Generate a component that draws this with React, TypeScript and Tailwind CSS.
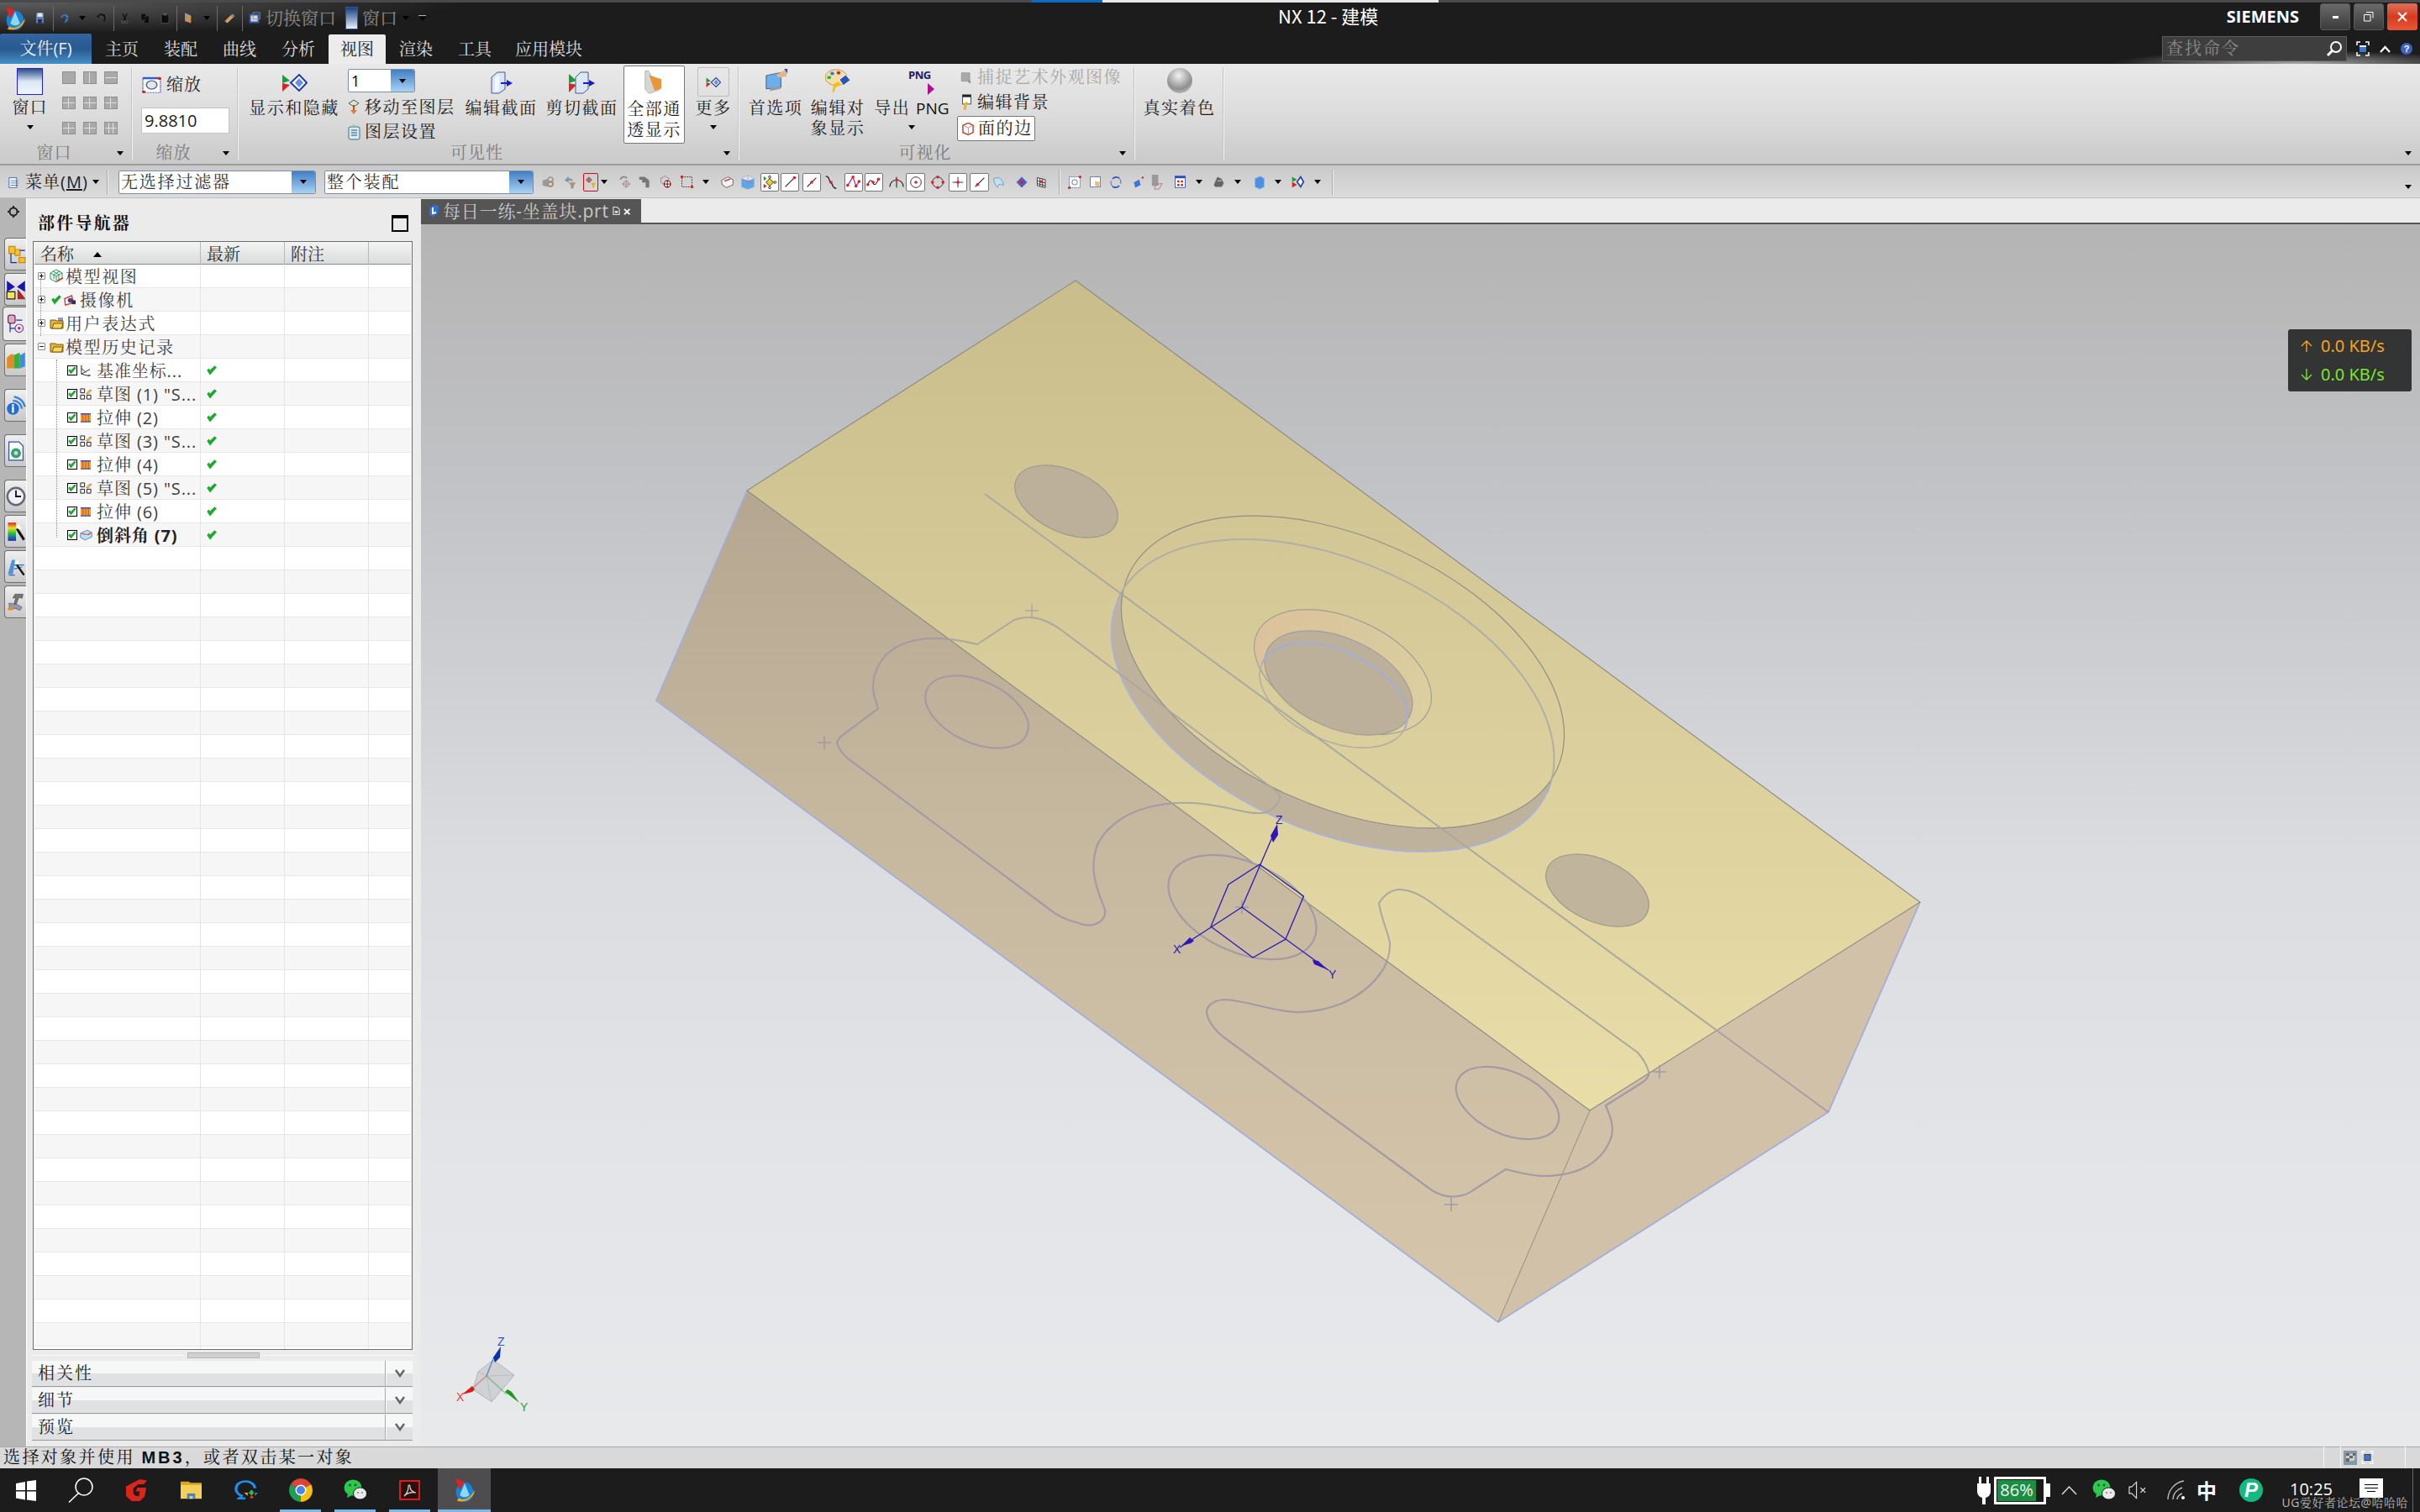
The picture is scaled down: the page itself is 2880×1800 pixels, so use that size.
import React from "react";

const cjk = "font-['Noto_Sans_CJK_SC','Liberation_Sans',sans-serif]";
const song = "font-['Open_Sans','Noto_Serif_CJK_SC','Noto_Sans_CJK_SC',sans-serif]";

const Caret = ({ className = "" }: { className?: string }) => (
  <span className={`inline-block h-0 w-0 shrink-0 border-x-[4px] border-t-[5px] border-x-transparent border-t-black ${className}`} />
);

const DropBtn = () => (
  <span className="flex h-full w-[28px] shrink-0 items-center justify-center rounded-r-[2px] bg-gradient-to-b from-[#3f7fc4] to-[#a9d2f2]">
    <Caret />
  </span>
);

const Icon = ({ size = 20, children, className = "" }: { size?: number; children: React.ReactNode; className?: string }) => (
  <svg width={size} height={size} viewBox="0 0 20 20" className={`shrink-0 ${className}`}>
    {children}
  </svg>
);

const NxLogo = ({ size = 26 }: { size?: number }) => (
  <svg width={size} height={size} viewBox="0 0 26 26" className="shrink-0">
    <ellipse cx="13" cy="15" rx="9" ry="10" fill="#1583d8" />
    <path d="M7 21c4 3 11 2 16-8 1 6-8 14-18 11z" fill="#f2a51e" />
    <path d="M13 6l5 12c-3 3-7 3-10 0z" fill="#8fd7f2" />
    <path d="M3 1l10 3-5 9z" fill="#d8232a" />
  </svg>
);

const Sep = ({ className = "" }: { className?: string }) => <span className={`h-[30px] w-px shrink-0 bg-[#6a6a6a] ${className}`} />;

const TitleBar = () => (
  <div className="relative flex h-[37px] items-center bg-[#1c1c1c]">
    <div className="flex h-full w-[545px] items-center bg-[radial-gradient(ellipse_100%_100%_at_left_top,#5e5e5e,#1c1c1c)] pl-[3px]">
      <NxLogo size={30} />
      <Icon size={15} className="ml-[7px]">
        <path d="M4 2h12v16H4z" fill="#5d7fc0" />
        <path d="M6 2h8v6H6z" fill="#dfe6f4" />
        <path d="M7 12h6v6H7z" fill="#1f2c52" />
      </Icon>
      <Sep className="ml-[8px]" />
      <Icon size={15} className="ml-[6px]">
        <path d="M3 8a7 7 0 0 1 13 1l-4 1c-1-4-4-5-6-3l2 2H3zM8 18c2-2 3-5 3-7l4 0c0 3-3 6-7 7z" fill="#3f78c6" />
      </Icon>
      <Caret className="ml-[9px] border-t-[#999]" />
      <Icon size={14} className="ml-[12px]">
        <path d="M14 8a5 5 0 0 0-9-1l3 2H2V3l2 2a7 7 0 0 1 13 4c0 4-2 7-5 8 1-3 2-6 2-9z" fill="#0c0c0c" stroke="#555" strokeWidth=".5" />
      </Icon>
      <Sep className="ml-[7px]" />
      <Icon size={14} className="ml-[6px]">
        <path d="M13 2l-6 12M6 2l5 12" stroke="#111" strokeWidth="2" />
        <circle cx="6" cy="16" r="2.400" fill="none" stroke="#666" />
        <circle cx="12" cy="16" r="2.400" fill="none" stroke="#666" />
      </Icon>
      <Icon size={14} className="ml-[10px]">
        <path d="M3 2h8v11H3zM8 6h8v12H8z" fill="#0b0b0b" stroke="#555" strokeWidth=".5" />
      </Icon>
      <Icon size={15} className="ml-[9px]">
        <path d="M4 4h12v14H4z" fill="#0c0c0c" stroke="#555" />
        <path d="M7 2h6v4H7z" fill="#555" />
      </Icon>
      <Sep className="ml-[6px]" />
      <Icon size={16} className="ml-[6px]">
        <path d="M4 2l9 4v11l-9-3z" fill="#c9924f" />
        <path d="M4 2l9 4-5 0-4 8z" fill="#999" />
      </Icon>
      <Caret className="ml-[9px] border-t-[#999]" />
      <Sep className="ml-[8px]" />
      <Icon size={16} className="ml-[6px]">
        <path d="M3 14l9-9 4 3-9 9z" fill="#c9a167" />
        <path d="M12 5l3-2 3 3-2 3z" fill="#888" />
      </Icon>
      <Sep className="ml-[7px]" />
      <Icon size={18} className="ml-[5px]">
        <path d="M4 5h11v10H4z" fill="#d8d8d8" stroke="#2a5fc0" strokeWidth="2" />
        <path d="M8 2h9v9H8z" fill="none" stroke="#888" />
      </Icon>
      <span className={`${song} ml-[4px] whitespace-nowrap text-[21px] leading-none text-[#8a8a8a]`}>切换窗口</span>
      <span className="ml-[11px] h-[27px] w-[15px] shrink-0 border border-[#2d4ec8] bg-gradient-to-b from-[#1b3f7c] to-[#e9f2fb]" />
      <span className={`${song} ml-[5px] whitespace-nowrap text-[21px] leading-none text-[#8a8a8a]`}>窗口</span>
      <Caret className="ml-[6px] border-t-[#bbb]" />
      <span className="ml-[11px] flex flex-col items-center gap-[1px]">
        <span className="h-px w-[9px] bg-[#aaa]" />
        <Caret className="border-t-[#aaa]" />
      </span>
    </div>
    <span className={`${cjk} absolute left-[1521px] top-0 text-[22px] leading-[30px] text-white`}>NX 12 - 建模</span>
    <div className="absolute right-[3px] top-[1px] flex items-center">
      <span className="mr-[25px] font-['Open_Sans',sans-serif] text-[20px] font-bold leading-none text-white">SIEMENS</span>
      <span className="mr-[4px] flex h-[32px] w-[36px] items-center justify-center rounded-[3px] border border-[#5a5a5a] bg-gradient-to-b from-[#6a6a6a] to-[#3c3c3c]">
        <span className="h-[3px] w-[7px] bg-white" />
      </span>
      <span className="mr-[4px] flex h-[32px] w-[36px] items-center justify-center rounded-[3px] border border-[#5a5a5a] bg-gradient-to-b from-[#6a6a6a] to-[#3c3c3c]">
        <svg width="12" height="12" viewBox="0 0 12 12">
          <path d="M3 .5h8v7M.5 3.500h7.500v7.500h-7.500z" fill="none" stroke="#fff" />
        </svg>
      </span>
      <span className="flex h-[32px] w-[36px] items-center justify-center rounded-[3px] bg-gradient-to-b from-[#d9705a] via-[#d9391a] to-[#e4583a]">
        <svg width="12" height="12" viewBox="0 0 12 12">
          <path d="M1 1l10 10M11 1L1 11" stroke="#fff" strokeWidth="2" />
        </svg>
      </span>
    </div>
  </div>
);

const tabs = ["主页", "装配", "曲线", "分析", "视图", "渲染", "工具", "应用模块"];

const TabBar = () => (
  <div className="relative flex h-[36px] items-end bg-[#1c1c1c]">
    <div className={`${song} flex h-[36px] w-[109px] items-center justify-center rounded-t-[2px] bg-gradient-to-b from-[#34659f] via-[#28598f] to-[#4590c7] text-[20px] text-[#e8eef6]`}>
      文件(F)
    </div>
    <div className={`${song} ml-[1px] flex text-[20px] text-[#dcdcdc]`}>
      {tabs.map((t) => (
        <span
          key={t}
          className={
            t === "视图"
              ? "mx-px flex h-[35px] w-[68px] items-center justify-center rounded-t-[2px] bg-[#ececec] text-[#222]"
              : "flex h-[35px] min-w-[70px] items-center justify-center whitespace-nowrap px-[13px]"
          }
        >
          {t}
        </span>
      ))}
    </div>
    <div className="absolute bottom-0 right-0 h-[16px] w-[370px] bg-[radial-gradient(ellipse_at_60%_bottom,#a8a8a8,transparent_70%)]" />
    <div className="absolute bottom-[3px] right-[87px] flex h-[30px] w-[220px] items-center justify-between border border-[#5c5c5c] bg-[#3e3e3e] pl-[4px] pr-[4px]">
      <span className={`${song} text-[20px] tracking-[2px] text-[#8d8d8d]`}>查找命令</span>
      <svg width="20" height="20" viewBox="0 0 20 20">
        <circle cx="12" cy="8" r="6" fill="none" stroke="#fff" strokeWidth="2" />
        <path d="M7.500 12.500L2 18" stroke="#fff" strokeWidth="3" />
      </svg>
    </div>
    <div className="absolute bottom-[9px] right-[9px] flex items-center gap-[12px]">
      <svg width="16" height="18" viewBox="0 0 16 18">
        <path d="M1 5V1h4M11 1h4v4M15 13v4h-4M5 17H1v-4" fill="none" stroke="#fff" strokeWidth="1.500" />
        <rect x="4" y="5" width="8" height="8" fill="#3c78d2" />
        <rect x="4" y="5" width="8" height="2" fill="#e8eef8" />
      </svg>
      <svg width="13" height="9" viewBox="0 0 13 9">
        <path d="M1 8l5.500-6L12 8" fill="none" stroke="#fff" strokeWidth="2.200" />
      </svg>
      <span className="flex h-[14px] w-[14px] items-center justify-center rounded-full bg-[#3c63c4] font-['Liberation_Sans',sans-serif] text-[11px] font-bold text-white">?</span>
    </div>
  </div>
);

const Grid = ({ h, v }: { h: boolean; v: number }) => (
  <span className="relative block h-[13px] w-[14px] bg-[#a9a9a9] outline outline-1 outline-[#8f8f8f]">
    {h && <span className="absolute left-0 top-[6px] h-px w-full bg-[#e0e0e0]" />}
    {v === 1 && <span className="absolute left-[6px] top-0 h-full w-px bg-[#e0e0e0]" />}
    {v === 2 && <span className="absolute left-[4px] top-0 h-full w-px bg-[#e0e0e0]" />}
    {v === 2 && <span className="absolute left-[9px] top-0 h-full w-px bg-[#e0e0e0]" />}
  </span>
);

const VSep = () => <div className="h-[111px] w-px shrink-0 bg-[#f2f2f2] shadow-[-1px_0_0_#c4c4c4]" />;

const Label = ({ children, className = "" }: { children: React.ReactNode; className?: string }) => (
  <span className={`${song} whitespace-nowrap text-[20px] leading-[24px] tracking-[1.500px] text-[#1d1d1d] ${className}`}>{children}</span>
);

const Footer = ({ children }: { children: React.ReactNode }) => (
  <div className="flex h-[24px] shrink-0 items-center">
    <span className={`${song} flex-1 text-center text-[20px] leading-none tracking-[1px] text-[#7c7c7c]`}>{children}</span>
    <span className="flex w-[28px] justify-center">
      <Caret />
    </span>
  </div>
);

const ShowHide = ({ w = 31, h = 21 }: { w?: number; h?: number }) => (
  <svg width={w} height={h} viewBox="0 0 31 21" className="shrink-0">
    <path d="M1 1l9 7-9 3z" fill="#1b9c3b" />
    <path d="M1 11l9 2-9 8z" fill="#d6242b" />
    <path d="M11 10.500L21 1l9 9.500L21 20z" fill="#fff" stroke="#2040b0" strokeWidth="2" />
    <path d="M16 10.500L21 5l5 5.500L21 16z" fill="#6a8fe0" />
  </svg>
);

const Ribbon = () => (
  <div className="relative flex h-[121px] bg-gradient-to-b from-[#e9e9e9] via-[#dcdcdc] to-[#c9c9c9] pt-[4px] shadow-[inset_0_-2px_0_#9c9c9c]">
    {/* 窗口 */}
    <div className="flex h-[114px] w-[157px] shrink-0 flex-col">
      <div className="flex h-[90px]">
        <div className="ml-[14px] flex w-[43px] flex-col items-center pt-px">
          <span className="h-[32px] w-[31px] border border-[#2020d8] bg-gradient-to-b from-[#2d4f85] via-[#dce8f6] to-[#eef4fb]" />
          <Label className="mt-[3px] tracking-[1px]">窗口</Label>
          <Caret className="mt-[9px]" />
        </div>
        <div className="ml-[18px] mt-[6px] grid h-[73px] grid-cols-3 gap-x-[11px] gap-y-[17px]">
          <Grid h={false} v={0} />
          <Grid h={false} v={1} />
          <Grid h={true} v={0} />
          <Grid h={true} v={1} />
          <Grid h={true} v={1} />
          <Grid h={true} v={1} />
          <Grid h={true} v={1} />
          <Grid h={true} v={1} />
          <Grid h={true} v={2} />
        </div>
      </div>
      <Footer>窗口</Footer>
    </div>
    <VSep />
    {/* 缩放 */}
    <div className="flex h-[114px] w-[125px] shrink-0 flex-col">
      <div className="flex h-[90px] flex-col pl-[10px] pt-[9px]">
        <div className="flex h-[24px] items-center pl-px">
          <svg width="23" height="20" viewBox="0 0 22 24" preserveAspectRatio="none">
            <rect x="1" y="2" width="20" height="21" fill="#fff" stroke="#2a3fc8" strokeDasharray="2 1" />
            <rect x="1" y="1" width="20" height="3" fill="#2a60c8" />
            <circle cx="11" cy="12" r="6" fill="#dfe6ee" stroke="#667" strokeWidth="1.500" />
            <circle cx="2" cy="22" r="2" fill="#e21d1d" />
            <circle cx="20" cy="3" r="2" fill="#e21d1d" />
          </svg>
          <Label className="ml-[6px] tracking-[1px]">缩放</Label>
        </div>
        <div className="mt-[15px] flex h-[31px] w-[105px] items-center border border-[#c4c4c4] bg-white pl-[3px] font-['Open_Sans',sans-serif] text-[20px] leading-none text-[#222]">
          9.8810
        </div>
      </div>
      <Footer>缩放</Footer>
    </div>
    <VSep />
    {/* 可见性 */}
    <div className="flex h-[114px] w-[595px] shrink-0 flex-col">
      <div className="flex h-[90px]">
        <div className="ml-[12px] flex w-[108px] flex-col items-center pt-[8px]">
          <ShowHide />
          <Label className="mt-[8px]">显示和隐藏</Label>
        </div>
        <div className="ml-[10px] flex w-[130px] flex-col pt-[2px]">
          <div className="flex h-[28px] w-[80px] items-center justify-between rounded-[2px] border border-[#7a8fa8] bg-white pl-[3px]">
            <span className="font-['Open_Sans',sans-serif] text-[18px] leading-none">1</span>
            <DropBtn />
          </div>
          <div className="mt-[6px] flex items-center">
            <svg width="15" height="20" viewBox="0 0 15 20" className="mr-[5px] shrink-0">
              <path d="M7 1l6 4-6 4-6-4z" fill="#cdeccb" stroke="#555" />
              <path d="M7 7v7" stroke="#d9402a" strokeWidth="2" />
              <path d="M3 13h8l-4 5z" fill="#d9802a" />
            </svg>
            <Label>移动至图层</Label>
          </div>
          <div className="mt-[5px] flex items-center">
            <svg width="15" height="20" viewBox="0 0 15 20" className="mr-[5px] shrink-0">
              <rect x="1" y="4" width="13" height="15" rx="2" fill="#d9eaf7" stroke="#3e6f7a" />
              <path d="M4 8h7M4 11h7M4 14h7" stroke="#2d4f6a" />
              <path d="M4 4l3-3 3 3z" fill="#82c5a0" />
            </svg>
            <Label>图层设置</Label>
          </div>
        </div>
        <div className="ml-[10px] flex w-[85px] flex-col items-center pt-[5px]">
          <svg width="26" height="27" viewBox="0 0 26 27">
            <path d="M1 7l7-6h9v20l-7 5H1z" fill="#dbe7f8" stroke="#4a5a7a" />
            <path d="M5 8l5-4v18l-5 3z" fill="#f4f8ff" />
            <path d="M12 14h8" stroke="#1d1dc8" strokeWidth="2" />
            <path d="M19 10l7 4-7 4z" fill="#1d1dc8" />
          </svg>
          <Label className="mt-[5px]">编辑截面</Label>
        </div>
        <div className="ml-[11px] flex w-[85px] flex-col items-center pt-[5px]">
          <svg width="33" height="27" viewBox="0 0 33 27">
            <path d="M1 3l9 8-9 3z" fill="#1b9c3b" />
            <path d="M1 14l9 2-9 9z" fill="#d6242b" />
            <path d="M9 7l6-6h9v20l-6 5H9z" fill="#dbe7f8" stroke="#4a5a7a" />
            <path d="M18 14h8" stroke="#1d1dc8" strokeWidth="2" />
            <path d="M25 10l7 4-7 4z" fill="#1d1dc8" />
          </svg>
          <Label className="mt-[5px]">剪切截面</Label>
        </div>
        <div className="-mt-[2px] ml-[7px] flex h-[93px] w-[73px] flex-col items-center rounded-[2px] border border-[#777] bg-white pt-[4px]">
          <svg width="30" height="29" viewBox="0 0 34 36">
            <path d="M3 2l5 0 16 28-15 5-6-6z" fill="#d6d6d6" stroke="#aaa" />
            <path d="M9 8l18 6 0 14-10 3z" fill="#e5973a" />
          </svg>
          <Label className="mt-[5px] leading-[25px]">全部通</Label>
          <Label className="leading-[25px]">透显示</Label>
        </div>
        <div className="ml-[13px] flex w-[42px] flex-col items-center">
          <span className="flex h-[35px] w-[38px] items-center justify-center rounded-[2px] border border-[#bcbcbc]">
            <ShowHide w={18} h={16} />
          </span>
          <Label className="mt-[2px]">更多</Label>
          <Caret className="mt-[8px]" />
        </div>
      </div>
      <Footer>可见性</Footer>
    </div>
    <VSep />
    {/* 可视化 */}
    <div className="flex h-[114px] w-[470px] shrink-0 flex-col">
      <div className="flex h-[90px]">
        <div className="ml-[11px] flex w-[64px] flex-col items-center pt-[2px]">
          <svg width="33" height="30" viewBox="0 0 34 34" preserveAspectRatio="none">
            <path d="M5 9l18-4 0 20-18 2z" fill="#6ab0ee" stroke="#556" />
            <path d="M9 30l14-3-3-4-9 2z" fill="#99a" />
            <path d="M17 8l10-6 4-1-1 9-9 2z" fill="#e2b58a" />
            <path d="M27 0l4 0 0 6z" fill="#2e4aa0" />
          </svg>
          <Label className="mt-[5px]">首选项</Label>
        </div>
        <div className="ml-[10px] flex w-[64px] flex-col items-center pt-[2px]">
          <svg width="30" height="30" viewBox="0 0 32 38" preserveAspectRatio="none">
            <ellipse cx="14" cy="13" rx="14" ry="12" fill="#f5dfa8" stroke="#b89148" />
            <circle cx="9" cy="7" r="2.500" fill="#2a80d8" />
            <circle cx="17" cy="6" r="2.500" fill="#d82a2a" />
            <circle cx="5" cy="13" r="2.500" fill="#30b050" />
            <path d="M18 16l8-7 6 8-9 8z" fill="#2d52b8" stroke="#fff" />
            <path d="M12 22l6-3 1 6-6 3-1 6-3 2 1-8z" fill="#f2c012" />
          </svg>
          <Label className="mt-[5px]">编辑对</Label>
          <Label>象显示</Label>
        </div>
        <div className="ml-[10px] flex w-[92px] flex-col items-center">
          <div className="ml-[26px] flex h-[32px] w-[34px] flex-col pt-[3px]">
            <span className="font-['Open_Sans',sans-serif] text-[13px] font-bold leading-[13px] tracking-[-0.5px] text-[#1c1c66]">PNG</span>
            <span className="ml-[23px] mt-[3px] h-0 w-0 border-y-[7px] border-l-[8px] border-y-transparent border-l-[#b0108a]" />
          </div>
          <Label className="mt-[5px]">
            导出 <span className="font-['Open_Sans',sans-serif] text-[19px] tracking-normal text-[#111]">PNG</span>
          </Label>
          <Caret className="mt-[8px]" />
        </div>
        <div className="ml-[8px] flex flex-col">
          <div className="flex h-[24px] items-center pl-[3px]">
            <svg width="16" height="15" viewBox="0 0 16 18" className="mr-[5px] shrink-0">
              <rect x="1" y="2" width="12" height="12" fill="#a9a9a9" stroke="#888" strokeDasharray="2 1" />
              <path d="M10 12l5 3-3 2z" fill="#a06ab0" />
            </svg>
            <Label className="!text-[#a9a9a9]">捕捉艺术外观图像</Label>
          </div>
          <div className="mt-[6px] flex h-[24px] items-center pl-[4px]">
            <svg width="15" height="20" viewBox="0 0 15 22" className="mr-[5px] shrink-0">
              <rect x="2" y="1" width="11" height="12" fill="#fff" stroke="#444" />
              <rect x="2" y="1" width="11" height="3" fill="#222" />
              <path d="M6 10l3 1-2 5v4l-4 1 1-6z" fill="#f2b21b" />
            </svg>
            <Label>编辑背景</Label>
          </div>
          <div className="mt-[4px] flex h-[30px] w-[93px] items-center rounded-[2px] border border-[#777] bg-white pl-[4px]">
            <svg width="15" height="18" viewBox="0 0 16 18" className="mr-[5px] shrink-0">
              <path d="M2 5l7-3 6 3v9l-6 3-7-3z" fill="#fff" stroke="#d0391a" strokeWidth="1.500" />
              <path d="M2 5l7 3 6-3M9 8v9" fill="none" stroke="#999" />
            </svg>
            <Label>面的边</Label>
          </div>
        </div>
      </div>
      <Footer>可视化</Footer>
    </div>
    <VSep />
    <div className="flex h-[90px] w-[105px] shrink-0 flex-col items-center pt-px">
      <span className="h-[30px] w-[30px] rounded-full bg-[radial-gradient(circle_at_45%_30%,#f2f2f2,#8f8f8f_60%,#ddd)]" />
      <Label className="mt-[6px]">真实着色</Label>
    </div>
    <VSep />
    <Caret className="absolute bottom-[12px] right-[10px]" />
  </div>
);

const SelectBox = ({ text, className = "" }: { text: string; className?: string }) => (
  <span className={`flex h-[28px] shrink-0 items-center justify-between rounded-[2px] border border-[#7a8fa8] bg-white pl-[2px] ${className}`}>
    <span className={`${song} text-[20px] leading-none tracking-[1.800px] text-[#333]`}>{text}</span>
    <DropBtn />
  </span>
);

const Mini = ({ children, box = false, className = "" }: { children: React.ReactNode; box?: boolean; className?: string }) => (
  <span className={`flex h-[22px] shrink-0 items-center justify-center ${box ? "rounded-[2px] border border-[#777] bg-white" : ""} ${className}`}>
    {children}
  </span>
);

const SmallCaret = ({ className = "" }: { className?: string }) => <Caret className={`border-x-[3px] border-t-[4px] ${className}`} />;
const BarSep = ({ className = "" }: { className?: string }) => <span className={`h-[30px] w-px shrink-0 bg-[#aaa] shadow-[1px_0_0_#eee] ${className}`} />;

const line = <path d="M4 16L16 4" stroke="#222" strokeWidth="1.200" />;
const redDot = (x: number, y: number) => <circle cx={x} cy={y} r="2" fill="#e02020" />;

const SelectBar = () => (
  <div className="relative flex h-[39px] items-center bg-gradient-to-b from-[#c9c9c9] to-[#dcdcdc] pl-[10px] shadow-[inset_0_-1px_0_#bdbdbd]">
    <svg width="16" height="18" viewBox="0 0 18 18" className="shrink-0">
      <rect x="1" y="3" width="10" height="13" fill="#fff" stroke="#2a60c8" />
      <path d="M3 7h10M3 10h10M3 13h10" stroke="#4a6ab8" />
    </svg>
    <span className={`${song} ml-[4px] w-[80px] whitespace-nowrap text-[20px] leading-none tracking-[1px] text-[#1d1d1d]`}>
      菜单(<span className="underline">M</span>)
    </span>
    <Caret />
    <BarSep className="ml-[9px]" />
    <SelectBox text="无选择过滤器" className="ml-[13px] w-[235px]" />
    <SelectBox text="整个装配" className="ml-[10px] w-[249px]" />
    <div className="flex items-center">
      <Mini className="ml-[9px] w-[17px]"><Icon size={17}><path d="M2 8l7-2v11l-7-2z" fill="#9a9a9a" /><circle cx="13" cy="7" r="3.500" fill="none" stroke="#999" strokeWidth="2" /><circle cx="13" cy="13" r="3.500" fill="none" stroke="#a08a60" strokeWidth="2" /></Icon></Mini>
      <Mini className="ml-[9px] w-[17px]"><Icon size={17}><path d="M8 11h10l-3 4v4h-4v-4z" fill="#a09878" /><path d="M2 8l6-6v3c4 0 6 2 6 5-2-2-4-2-6-2v3z" fill="#7a98a8" /></Icon></Mini>
      <Mini box className="ml-[7px] w-[18px] !border-[#d01010] !bg-transparent"><Icon size={14}><circle cx="7" cy="6" r="3.500" fill="none" stroke="#702020" /><path d="M7 1v10M2 6h10" stroke="#702020" /><path d="M10 11h9l-3 4v4h-3v-4z" fill="#e8b020" /></Icon></Mini>
      <Caret className="ml-[3px]" />
      <Mini className="ml-[13px] w-[15px]"><Icon size={17}><path d="M4 7a5 5 0 0 1 9-2" fill="none" stroke="#888" strokeWidth="2" /><circle cx="12" cy="13" r="4" fill="none" stroke="#a08080" /><path d="M12 7v12M6 13h12" stroke="#a08080" /></Icon></Mini>
      <Mini className="ml-[8px] w-[17px]"><Icon size={17}><path d="M2 3h8l6 5v10h-5v-7H6V7H2z" fill="#777" /></Icon></Mini>
      <Mini className="ml-[8px] w-[17px]"><Icon size={17}><path d="M3 5l6-3 5 3v6l-5 3-6-3z" fill="none" stroke="#444" strokeDasharray="1 1" /><circle cx="12" cy="13" r="4.500" fill="#fff" stroke="#c01010" strokeWidth="1.500" /><path d="M12 8v10M7 13h10" stroke="#111" /></Icon></Mini>
      <Mini className="ml-[8px] w-[17px]"><Icon size={17}><rect x="3" y="3" width="14" height="14" fill="none" stroke="#222" strokeDasharray="2 1.500" />{redDot(3, 3)}{redDot(17, 17)}</Icon></Mini>
      <SmallCaret className="ml-[10px]" />
      <Mini className="ml-[13px] w-[17px]"><Icon size={17}><path d="M2 8l9-5 7 4v7l-9 4-6-4z" fill="#f3f3f3" stroke="#555" /><path d="M6 9l8-3" stroke="#d02020" strokeWidth="1.500" /></Icon></Mini>
      <Mini className="ml-[7px] w-[17px]"><Icon size={18}><path d="M2 5l8-4 8 4v11l-8 3-8-3z" fill="#58a8ee" stroke="#7ea8d8" /><path d="M2 5l8 3 8-3-8-4z" fill="#dfe9f5" /><path d="M10 1v12M3 6l14 5" stroke="#e06060" strokeWidth=".7" /></Icon></Mini>
      <Mini box className="ml-[7px] w-[22px]"><Icon size={18}><path d="M10 5l5 5-5 5-5-5z" fill="#f0d020" stroke="#222" /><path d="M2 2l4 3-4 3z" fill="#1b9c3b" /><path d="M2 12l4 3-4 3z" fill="#d6242b" /><circle cx="10" cy="3" r="1.500" fill="none" stroke="#222" /><circle cx="17" cy="10" r="1.500" fill="none" stroke="#222" /><circle cx="10" cy="17" r="1.500" fill="none" stroke="#222" /></Icon></Mini>
      <Mini box className="ml-[2px] w-[22px]"><Icon size={18}>{line}{redDot(16, 4)}</Icon></Mini>
      <Mini box className="ml-[4px] w-[22px]"><Icon size={18}>{line}{redDot(10, 10)}</Icon></Mini>
      <Mini className="ml-[4px] w-[16px]"><Icon size={18}><path d="M3 2c6 0 4 8 7 9s1 7 7 7" fill="none" stroke="#222" strokeWidth="1.500" />{redDot(10, 10)}</Icon></Mini>
      <Mini box className="ml-[8px] w-[22px]"><Icon size={18}><path d="M2 14L9 3l4 12 4-6" fill="none" stroke="#a020c0" strokeWidth="1.300" />{redDot(9, 3)}{redDot(13, 15)}{redDot(2, 14)}{redDot(17, 9)}</Icon></Mini>
      <Mini box className="ml-[2px] w-[22px]"><Icon size={18}><path d="M2 13c3-8 5-6 7-2s4 2 7-5" fill="none" stroke="#222" strokeWidth="1.200" />{redDot(2, 13)}{redDot(9, 10)}{redDot(16, 6)}</Icon></Mini>
      <Mini className="ml-[7px] w-[17px]"><Icon size={18}><path d="M1 16a9 9 0 0 1 18 0M10 3v14" fill="none" stroke="#222" strokeWidth="1.200" />{redDot(10, 7)}</Icon></Mini>
      <Mini box className="ml-[3px] w-[23px]"><Icon size={18}><circle cx="10" cy="10" r="7" fill="none" stroke="#222" />{redDot(10, 10)}</Icon></Mini>
      <Mini className="ml-[7px] w-[15px]"><Icon size={18}><circle cx="10" cy="10" r="7" fill="none" stroke="#222" />{redDot(10, 3)}{redDot(3, 10)}{redDot(17, 10)}{redDot(10, 17)}</Icon></Mini>
      <Mini box className="ml-[6px] w-[22px]"><Icon size={18}><path d="M3 10h14M10 3v14" stroke="#222" />{redDot(10, 10)}</Icon></Mini>
      <Mini box className="ml-[3px] w-[23px]"><Icon size={18}>{line}{redDot(7, 13)}</Icon></Mini>
      <Mini className="ml-[3px] w-[17px]"><Icon size={18}><path d="M3 5c7-3 12 1 13 9-2-1-4-2-6-1-2 1-2 3-2 4C5 14 3 10 3 5z" fill="#bfe1f7" stroke="#6e96c0" /></Icon></Mini>
      <Mini className="ml-[11px] w-[15px]"><Icon size={16}><path d="M10 2l8 8-8 8-8-8z" fill="#4d5ec8" /><circle cx="10" cy="10" r="2.500" fill="#e02020" /></Icon></Mini>
      <Mini className="ml-[10px] w-[13px]"><Icon size={16}><path d="M3 3l12 3v12L3 15z" fill="#eee" stroke="#222" /><path d="M7 4v12M11 5v12M3 8l12 3M3 12l12 3" stroke="#222" /><circle cx="9" cy="9" r="2" fill="#e02020" /></Icon></Mini>
      <BarSep className="ml-[14px]" />
      <Mini className="ml-[10px] w-[16px]"><Icon size={16}><rect x="2" y="2" width="16" height="16" fill="#fff" stroke="#2a60c8" strokeDasharray="2 1" /><circle cx="10" cy="10" r="4" fill="none" stroke="#556" />{redDot(2, 18)}{redDot(18, 2)}</Icon></Mini>
      <Mini className="ml-[9px] w-[15px]"><Icon size={16}><rect x="2" y="2" width="15" height="15" fill="#fff" stroke="#4a6ab8" /><path d="M9 8l7 2-1 7-6-2z" fill="#e9bb80" /></Icon></Mini>
      <Mini className="ml-[9px] w-[15px]"><Icon size={16}><path d="M5 5a7 7 0 0 1 10-1M15 15a7 7 0 0 1-10 1" fill="none" stroke="#2a50b8" strokeWidth="2" /><path d="M3 8a7 7 0 0 0 2 8M17 12a7 7 0 0 0-2-8" fill="none" stroke="#2a50b8" /></Icon></Mini>
      <Mini className="ml-[12px] w-[16px]"><Icon size={16}><path d="M3 10l8-4 2 8-8 4z" fill="#3c78d2" /><circle cx="16" cy="3" r="1.500" fill="#e02020" /></Icon></Mini>
      <Mini className="ml-[6px] w-[17px]"><Icon size={19}><rect x="3" y="1" width="8" height="14" fill="#999" /><path d="M8 13l8-1-4 7H6z" fill="none" stroke="#b08080" /></Icon></Mini>
      <Mini className="ml-[10px] w-[16px]"><Icon size={17}><rect x="3" y="2" width="14" height="16" fill="#fff" stroke="#2a50b8" /><rect x="3" y="2" width="14" height="3" fill="#2a50b8" /><path d="M6 8h3v3H6zM11 8h3v3h-3zM6 13h3v3H6zM11 13h3v3h-3z" fill="#e02020" /></Icon></Mini>
      <SmallCaret className="ml-[11px]" />
      <Mini className="ml-[11px] w-[16px]"><Icon size={17}><path d="M3 14l5-11 6 3 3 6-3 5H5z" fill="#666" /><path d="M8 9l6-1" stroke="#ddd" /></Icon></Mini>
      <SmallCaret className="ml-[11px]" />
      <Mini className="ml-[14px] w-[15px]"><Icon size={18}><path d="M4 5l7-3 5 3v11l-6 3-6-3z" fill="#4d8fe0" stroke="#88b4ea" /></Icon></Mini>
      <SmallCaret className="ml-[11px]" />
      <Mini className="ml-[11px] w-[16px]"><Icon size={17}><path d="M9 10l5-7 4 7-4 7z" fill="#fff" stroke="#2040b0" strokeWidth="2" /><path d="M2 3l7 4-7 3z" fill="#1b9c3b" /><path d="M2 10l7 4-7 4z" fill="#d6242b" /></Icon></Mini>
      <SmallCaret className="ml-[12px]" />
      <BarSep className="ml-[13px]" />
    </div>
    <Caret className="absolute bottom-[11px] right-[10px]" />
  </div>
);

const SideTab = ({ children, active = false, className = "" }: { children: React.ReactNode; active?: boolean; className?: string }) => (
  <div
    className={`flex items-center justify-center rounded-l-[4px] border border-r-0 border-[#6f6f6f] ${active ? "-mt-[2px] ml-[-2px] h-[41px] w-[28px] bg-[#ebebeb]" : "h-[39px] w-[26px] bg-gradient-to-b from-[#efefef] to-[#c8c8c8]"} ${className}`}
  >
    {children}
  </div>
);

const ResourceBar = () => (
  <div className="flex w-[31px] shrink-0 flex-col items-end bg-[#b6b6b6]">
    <div className="flex h-[23px] w-full items-end justify-center self-start">
      <svg width="14" height="14" viewBox="0 0 14 14">
        <circle cx="7" cy="7" r="4.500" fill="none" stroke="#222" strokeWidth="2" />
        <path d="M7 0v2M7 12v2M0 7h2M12 7h2" stroke="#222" strokeWidth="2" />
      </svg>
    </div>
    <div className="flex flex-col items-end gap-[3px] pt-[24px]">
      <SideTab>
        <Icon size={24}>
          <path d="M3 2h6v7H3zM9 5h5v6H9z" fill="#f1c232" stroke="#c88a10" />
          <path d="M5 9v9h6M14 6h5" stroke="#0a2fa8" fill="none" />
          <path d="M13 13h6v5h-6z" fill="#f1c232" stroke="#c88a10" />
        </Icon>
      </SideTab>
      <SideTab>
        <Icon size={24}>
          <path d="M1 1l8 6-8 5zM19 1l-8 6 8 5z" fill="#1717b0" />
          <path d="M1 12h8v7H1z" fill="#f6e25c" stroke="#222" />
          <path d="M12 10l7 9h-7z" fill="#d01818" stroke="#222" strokeWidth=".5" />
        </Icon>
      </SideTab>
      <SideTab active>
        <Icon size={24}>
          <rect x="3" y="1" width="7" height="8" rx="2" fill="#e6a7c6" stroke="#6a2a60" />
          <path d="M5 9v9M5 14h5M11 6h6" stroke="#0a2fa8" fill="none" />
          <circle cx="14" cy="14" r="4" fill="none" stroke="#8a3a8a" />
          <circle cx="14" cy="14" r="1.500" fill="#8a3a8a" />
        </Icon>
      </SideTab>
      <SideTab>
        <Icon size={24}>
          <path d="M1 7l4-3 3 0v14H1z" fill="#e58a22" />
          <path d="M8 5l4-2 2 0v15H8z" fill="#38b038" />
          <path d="M14 5l5-3v14l-5 2z" fill="#3a8fe2" />
        </Icon>
      </SideTab>
      <SideTab className="mt-[12px]">
        <Icon size={24}>
          <circle cx="7" cy="13" r="6" fill="#1f6fd8" />
          <rect x="6" y="11" width="2" height="6" fill="#fff" />
          <rect x="6" y="8.500" width="2" height="2" fill="#fff" />
          <path d="M7 5a9 9 0 0 1 9 8M8 1a13 13 0 0 1 11 10" stroke="#3a82dc" strokeWidth="2" fill="none" />
        </Icon>
      </SideTab>
      <SideTab className="mt-[12px]">
        <Icon size={24}>
          <path d="M3 1h10l4 4v14H3z" fill="#fff" stroke="#2a50b8" />
          <circle cx="10" cy="12" r="5" fill="#3f9f6a" />
          <circle cx="10" cy="12" r="2" fill="#bfe0f0" />
        </Icon>
      </SideTab>
      <SideTab className="mt-[12px]">
        <Icon size={24}>
          <circle cx="10" cy="10" r="8.500" fill="#eef1f6" stroke="#667" strokeWidth="2" />
          <path d="M10 4v6h5" stroke="#111" strokeWidth="1.500" fill="none" />
        </Icon>
      </SideTab>
      <SideTab>
        <svg width="24" height="24" viewBox="0 0 20 20">
          <defs>
            <linearGradient id="rb" x1="0" y1="0" x2="0" y2="1">
              <stop offset="0" stopColor="#e02020" />
              <stop offset=".3" stopColor="#e8e020" />
              <stop offset=".6" stopColor="#20c040" />
              <stop offset="1" stopColor="#2020e0" />
            </linearGradient>
          </defs>
          <rect x="2" y="1" width="8" height="18" fill="url(#rb)" />
          <path d="M11 7l7 11" stroke="#111" strokeWidth="2.500" />
          <path d="M10 5l3-3 1 4 3 0-4 2z" fill="#fff" />
        </svg>
      </SideTab>
      <SideTab>
        <Icon size={24}>
          <path d="M2 17l4-14h3l-2 14z" fill="#4f90dc" />
          <path d="M8 8h10M8 12l8-2M3 18h6" stroke="#2a70c8" fill="none" />
          <path d="M11 8l7 10" stroke="#111" strokeWidth="2" />
          <path d="M9 6l3-3 1 4z" fill="#fff" />
        </Icon>
      </SideTab>
      <SideTab>
        <Icon size={24}>
          <path d="M9 2h8l-1 4-3-1-3 7H8l2-7-3 1z" fill="#777" stroke="#333" strokeWidth=".5" />
          <path d="M3 11l8 1 5 3-2 3-5-2-5 1z" fill="#8f9bb0" stroke="#445" strokeWidth=".5" />
          <path d="M2 15h5v3H2z" fill="#f08a1c" />
        </Icon>
      </SideTab>
    </div>
  </div>
);

const Plus = ({ open }: { open?: boolean }) => (
  <span className="relative flex h-[9px] w-[9px] shrink-0 items-center justify-center rounded-[1px] border border-[#8a8a8a] bg-white">
    <span className="h-px w-[5px] bg-[#222]" />
    {!open && <span className="absolute h-[5px] w-px bg-[#222]" />}
  </span>
);

const Check = ({ size = 12 }: { size?: number }) => (
  <svg width={size} height={size} viewBox="0 0 12 12" className="shrink-0">
    <path d="M1 6l3 4.500 7-8-1.500-1.500L4 6.500 2.500 4.500z" fill="#1aa92c" stroke="#1aa92c" strokeWidth="1.200" />
  </svg>
);

const BoxCheck = () => (
  <span className="flex h-[12px] w-[12px] shrink-0 items-center justify-center border border-black bg-white">
    <Check size={10} />
  </span>
);

const SketchIcon = () => (
  <svg width="14" height="14" viewBox="0 0 15 15" className="shrink-0">
    <path d="M1 1h5v5H1zM1 9h5v5H1zM9 9h5v5H9z" fill="#fff" stroke="#111" />
    <path d="M8 7l5-5 2 1-5 5z" fill="#e9c63a" stroke="#c03030" strokeWidth=".5" />
  </svg>
);

const ExtrudeIcon = () => (
  <svg width="14" height="14" viewBox="0 0 15 15" className="shrink-0">
    <path d="M1 3h13v10H1z" fill="#f0a030" />
    <path d="M4 3v10M7.500 3v10M11 3v10" stroke="#d04a10" />
    <path d="M1 3h13M1 13h13" stroke="#2a50c8" strokeWidth="1.500" />
  </svg>
);

const DatumIcon = () => (
  <svg width="14" height="14" viewBox="0 0 15 15" className="shrink-0">
    <path d="M2 1v11l11 3M2 12l11-6M2 5l6 5" stroke="#222" fill="none" />
    <path d="M10 13l4 1" stroke="#d02020" />
    <path d="M1 2h2" stroke="#1a9c2a" />
  </svg>
);

const ChamferIcon = () => (
  <svg width="15" height="14" viewBox="0 0 17 15" className="shrink-0">
    <path d="M1 5l9-4 6 3v6l-9 4-6-3z" fill="#bfe1f7" stroke="#3a80d8" />
    <path d="M1 5l9 2 6-3M4 6l9 1" stroke="#e24a2a" fill="none" strokeWidth="1.200" />
  </svg>
);

const HIST: { icon: React.ReactNode; text: string; bold?: boolean }[] = [
  { icon: <DatumIcon />, text: "基准坐标..." },
  { icon: <SketchIcon />, text: '草图 (1) "S...' },
  { icon: <ExtrudeIcon />, text: "拉伸 (2)" },
  { icon: <SketchIcon />, text: '草图 (3) "S...' },
  { icon: <ExtrudeIcon />, text: "拉伸 (4)" },
  { icon: <SketchIcon />, text: '草图 (5) "S...' },
  { icon: <ExtrudeIcon />, text: "拉伸 (6)" },
  { icon: <ChamferIcon />, text: "倒斜角 (7)", bold: true },
];

const Row = ({ i, children, check = false }: { i: number; children?: React.ReactNode; check?: boolean }) => (
  <div className={`grid h-[28px] shrink-0 grid-cols-[198px_100px_100px_1fr] border-b border-[#e6e6e6] ${i % 2 === 0 ? "bg-white" : "bg-[#f6f6f6]"}`}>
    <div className="relative flex items-center overflow-hidden border-r border-[#e4e4e4]">{children}</div>
    <div className="flex items-center border-r border-[#e4e4e4] pl-[7px]">{check && <Check />}</div>
    <div className="border-r border-[#e4e4e4]" />
    <div />
  </div>
);

const rowText = `${song} pt-[2px] text-[20px] leading-none tracking-[1.600px] text-[#3f3f3f] whitespace-nowrap`;

const FolderIcon = ({ lines = false }: { lines?: boolean }) => (
  <svg width="17" height="15" viewBox="0 0 17 15" className="ml-[5px] shrink-0">
    <path d="M1 4h6l1 1h8v9H1z" fill="#e9b43a" stroke="#7a5a10" />
    <path d="M3 14l2-6h11l-2 6z" fill="#f6d760" stroke="#7a5a10" />
    {lines && <path d="M10 2h6M10 4h6" stroke="#336" />}
  </svg>
);

const Navigator = () => (
  <div className="flex w-[470px] shrink-0 flex-col bg-[#ebebeb] shadow-[inset_1px_0_0_#fff]">
    <div className="flex h-[51px] shrink-0 items-center justify-between pl-[14px] pr-[15px] pt-[8px]">
      <span className={`${song} text-[20px] font-bold tracking-[2.200px] text-[#111]`}>部件导航器</span>
      <span className="h-[20px] w-[20px] border-[2px] border-t-[4px] border-black" />
    </div>
    <div className="relative ml-[8px] mr-[10px] flex h-[1320px] shrink-0 flex-col overflow-hidden border border-[#6d6d6d] bg-[#f7f7f7] px-px">
      <div className={`grid h-[27px] shrink-0 grid-cols-[198px_100px_100px_1fr] border-b border-[#8a8a8a] bg-gradient-to-b from-[#f4f4f4] to-[#d9dcdc] ${song} text-[20px] text-[#333]`}>
        <div className="flex items-center border-r border-[#b8b8b8] pl-[7px]">
          名称
          <span className="ml-[23px] h-0 w-0 border-x-[5px] border-b-[6px] border-x-transparent border-b-black" />
        </div>
        <div className="flex items-center border-r border-[#b8b8b8] pl-[7px]">最新</div>
        <div className="flex items-center border-r border-[#b8b8b8] pl-[7px]">附注</div>
        <div />
      </div>
      <Row i={0}>
        <span className="ml-[4px] flex"><Plus /></span>
        <svg width="17" height="17" viewBox="0 0 17 17" className="ml-[5px] shrink-0">
          <path d="M8 1l7 4v7l-7 4-7-4V5zM1 5l7 4 7-4M8 9v7M4 3l7 4v5M12 3L5 7v5" fill="none" stroke="#1f9a58" />
          <path d="M9 14l7-3" stroke="#e0401a" strokeWidth="1.500" />
        </svg>
        <span className={`${rowText} ml-[2px]`}>模型视图</span>
      </Row>
      <Row i={1}>
        <span className="ml-[4px] flex"><Plus /></span>
        <span className="ml-[7px] flex"><Check /></span>
        <svg width="14" height="14" viewBox="0 0 15 15" className="ml-[3px] shrink-0">
          <path d="M1 6l9-4 2 9-10 3z" fill="#fff" stroke="#e02a1a" strokeWidth="1.400" />
          <circle cx="8" cy="8" r="3" fill="#4a3aa8" />
          <rect x="10" y="8" width="5" height="5" fill="#333" />
        </svg>
        <span className={`${rowText} ml-[5px]`}>摄像机</span>
      </Row>
      <Row i={0}>
        <span className="ml-[4px] flex"><Plus /></span>
        <FolderIcon lines />
        <span className={`${rowText} ml-[2px]`}>用户表达式</span>
      </Row>
      <Row i={1}>
        <span className="ml-[4px] flex"><Plus open /></span>
        <FolderIcon />
        <span className={`${rowText} ml-[2px]`}>模型历史记录</span>
      </Row>
      {HIST.map((h, i) => (
        <Row key={i} i={i} check>
          <span className="ml-[39px] flex"><BoxCheck /></span>
          <span className="ml-[3px] flex w-[15px]">{h.icon}</span>
          <span className={`${rowText} ml-[5px] !tracking-[0.900px] ${h.bold ? "font-bold text-[#222]" : ""}`}>{h.text}</span>
        </Row>
      ))}
      {Array.from({ length: 35 }).map((_, i) => (
        <Row key={i} i={i} />
      ))}
      <div className="pointer-events-none absolute left-[8px] top-[36px] h-[76px] w-px border-l border-dotted border-[#888]" />
      <div className="pointer-events-none absolute left-[27px] top-[140px] h-[212px] w-px border-l border-dotted border-[#888]" />
    </div>
    <div className="mx-[8px] mt-[3px] flex h-[7px] shrink-0 items-center">
      <span className="h-px flex-1 bg-[#fafafa]" />
      <span className="mx-[4px] h-[7px] w-[86px] border border-[#b5b5b5] bg-[#d0d0d0]" />
      <span className="h-px flex-1 bg-[#fafafa]" />
    </div>
    <div className="h-[3px] shrink-0" />
    {["相关性", "细节", "预览"].map((t) => (
      <div key={t} className="mb-px ml-[7px] mr-[10px] flex h-[31px] shrink-0 border-b border-[#9a9a9a] bg-gradient-to-b from-[#f6f7f7] from-50% to-[#dfe1e2] to-50%">
        <span className={`${song} flex-1 pl-[7px] text-[20px] leading-[29px] tracking-[2px] text-[#222]`}>{t}</span>
        <span className="flex w-[32px] items-center justify-center border-l border-[#fafafa] shadow-[-1px_0_0_#aaa]">
          <svg width="12" height="10" viewBox="0 0 12 10">
            <path d="M1 1l5 7 5-7" fill="none" stroke="#666" strokeWidth="2.500" />
          </svg>
        </span>
      </div>
    ))}
  </div>
);

const DocTab = () => (
  <div className="flex h-[31px] shrink-0 items-end border-b-[2px] border-[#555] bg-[#ebebeb]">
    <div className="flex h-[28px] w-[262px] items-center bg-[#555555] pl-[8px]">
      <svg width="14" height="16" viewBox="0 0 14 16" className="shrink-0">
        <path d="M2 5l5-4 6 1-1 9-5 4-5-2z" fill="#2f6fe0" />
        <path d="M6 4v7l4-1" fill="none" stroke="#fff" strokeWidth="2" />
      </svg>
      <span className={`${song} ml-[4px] whitespace-nowrap text-[21px] leading-none tracking-[0.800px] text-[#c9c9c9]`}>每日一练-坐盖块.prt</span>
      <svg width="9" height="12" viewBox="0 0 10 12" className="ml-[4px] shrink-0">
        <path d="M1 1h5l3 3v7H1z" fill="none" stroke="#ddd" strokeWidth="1.300" />
        <path d="M3 6h4v3H3z" fill="#ddd" />
      </svg>
      <span className="ml-[4px] font-['Liberation_Sans',sans-serif] text-[15px] font-bold leading-none text-white">×</span>
    </div>
  </div>
);

const OUTLINE_A =
  "M996 884C998 879 1000 877 1003 875L1045 843.500C1042 832 1038 825 1039 815C1040 800 1046 789 1054 780C1070 765 1090 760 1112 760C1130 760 1147 763 1163 767L1207 738C1220 733 1235 735 1246 740C1252 743 1258 746 1263 750L1518 941C1523 945 1524 950 1522 953C1518 962 1510 968 1500 968C1485 969 1470 963 1451 960C1432 956 1415 955 1397 956C1375 958 1355 963 1339 972C1322 982 1312 993 1306 1006C1302 1016 1301 1026 1301.500 1037C1303 1055 1310 1070 1315 1083C1316 1090 1313 1095 1308 1098C1300 1103 1290 1102 1281 1098C1272 1096 1263 1092 1255 1087L1009 903C1002 897 998 891 996 884Z";
const OUTLINE_B =
  "M1663 1059C1655 1060 1647 1066 1641 1075C1643 1090 1650 1105 1654 1122C1655 1135 1650 1150 1641 1161C1630 1176 1614 1187 1596 1195C1578 1202 1560 1205 1543 1205C1515 1204 1487 1192 1458 1190C1447 1190 1438 1195 1436 1203C1436 1214 1444 1224 1454 1233L1704 1417C1714 1423 1725 1426 1735 1424C1743 1423 1748 1421 1753 1417L1792 1392C1808 1396 1822 1400 1837 1400C1858 1400 1876 1396 1891 1387C1905 1378 1914 1366 1918 1352C1921 1338 1915 1327 1911 1316L1954 1289C1960 1285 1963 1281 1962 1276C1960 1268 1955 1260 1949 1253L1704 1075C1692 1066 1678 1058 1663 1059Z";

const ModelView = () => (
  <svg viewBox="501 267 2379 1455" className="block h-full w-full" fontFamily="Liberation Sans, sans-serif">
    <defs>
      <linearGradient id="sideFill" gradientUnits="userSpaceOnUse" x1="0" y1="300" x2="0" y2="1600">
        <stop offset="0" stopColor="#a79a86" />
        <stop offset="0.5" stopColor="#c5b79e" />
        <stop offset="1" stopColor="#d6c7ac" />
      </linearGradient>
      <linearGradient id="topFill" gradientUnits="userSpaceOnUse" x1="0" y1="334" x2="0" y2="1322">
        <stop offset="0" stopColor="#c9bd8b" />
        <stop offset="0.5" stopColor="#d9ce9b" />
        <stop offset="1" stopColor="#e9dea8" />
      </linearGradient>
      <linearGradient id="discFill" gradientUnits="userSpaceOnUse" x1="0" y1="334" x2="0" y2="1322" gradientTransform="rotate(-24.300 1598 800)">
        <stop offset="0" stopColor="#c9bd8b" />
        <stop offset="0.5" stopColor="#d9ce9b" />
        <stop offset="1" stopColor="#e9dea8" />
      </linearGradient>
      <linearGradient id="wallFill" x1="0" y1="0" x2="1" y2="0">
        <stop offset="0" stopColor="#dcc29a" />
        <stop offset="0.5" stopColor="#d9c89e" />
        <stop offset="1" stopColor="#dccfa0" />
      </linearGradient>
      <clipPath id="topClip">
        <path d="M889 584L1280 334L2285 1074L1892 1322Z" />
      </clipPath>
      <clipPath id="sideClip">
        <path d="M889 584L781 834L1783 1574L2176 1324L2285 1074L1892 1322Z" />
      </clipPath>
    </defs>

    {/* faces */}
    <path d="M889 584L781 834L1783 1574L1892 1322Z" fill="url(#sideFill)" />
    <path d="M1892 1322L1783 1574L2176 1324L2285 1074Z" fill="#d0c1a8" />
    <path d="M889 584L1280 334L2285 1074L1892 1322Z" fill="url(#topFill)" />
    <path d="M889 584L781 834L1783 1574L2176 1324L2285 1074" fill="none" stroke="#a3aed8" strokeWidth="1.800" />
    <path d="M889 584L1280 334L2285 1074L1892 1322Z" fill="none" stroke="#8d8d85" strokeWidth="1.200" />
    <path d="M1892 1322L1783 1574" fill="none" stroke="#8d8d85" strokeWidth="1" />

    {/* counterbore */}
    <g transform="rotate(24.300 1586 828)">
      <ellipse cx="1586" cy="828" rx="280" ry="160" fill="#bfb29c" stroke="#a9b3dc" strokeWidth="1.800" />
    </g>
    <g transform="rotate(24.300 1598 800)">
      <ellipse cx="1598" cy="800" rx="280" ry="160" fill="url(#discFill)" stroke="#8f8f88" strokeWidth="1.200" />
    </g>
    <g transform="rotate(24.300 1586 828)">
      <path d="M1306 828A280 160 0 0 1 1866 828" fill="none" stroke="#b0aea6" strokeWidth="2" />
    </g>

    {/* centre hole */}
    <g transform="rotate(24.300 1598 800)">
      <ellipse cx="1598" cy="800" rx="112" ry="64" fill="url(#wallFill)" stroke="#a09f96" strokeWidth="1.200" />
    </g>
    <g transform="rotate(24.300 1593 813)">
      <ellipse cx="1593" cy="813" rx="93.500" ry="53.500" fill="#bdb09b" stroke="#a09f96" strokeWidth="1.200" />
    </g>
    <g transform="rotate(24.300 1587 828)" fill="none">
      <ellipse cx="1587" cy="828" rx="93.500" ry="53.500" stroke="#b0aea6" strokeWidth="1.600" />
      <path d="M1493.500 828A93.500 53.500 0 0 1 1680.500 828" stroke="#a3aed8" strokeWidth="2" />
    </g>

    {/* small holes on the top face */}
    <ellipse cx="1269" cy="597" rx="65" ry="37" transform="rotate(24.300 1269 597)" fill="#bdb09a" stroke="#99998f" strokeWidth="1.200" />
    <ellipse cx="1901" cy="1060" rx="65" ry="37" transform="rotate(24.300 1901 1060)" fill="#c1b49c" stroke="#99998f" strokeWidth="1.200" />

    {/* lines seen through the part */}
    <g fill="none" strokeLinejoin="round">
      <g clipPath="url(#topClip)" stroke="#aaa89f" strokeWidth="2">
        <path d="M1172 588L2176 1324" />
        <path d={OUTLINE_A} />
        <path d={OUTLINE_B} />
      </g>
      <g clipPath="url(#sideClip)" stroke="#a49aa4" strokeWidth="2.200">
        <path d="M1172 588L2176 1324" strokeWidth="1.600" />
        <path d={OUTLINE_A} />
        <path d={OUTLINE_B} />
        <ellipse cx="1162.500" cy="847.500" rx="65" ry="37" transform="rotate(24.300 1162.500 847.500)" />
        <ellipse cx="1478.500" cy="1080" rx="93.500" ry="53.500" transform="rotate(24.300 1478.500 1080)" />
        <ellipse cx="1794" cy="1313" rx="65" ry="37" transform="rotate(24.300 1794 1313)" />
      </g>
      <g clipPath="url(#topClip)" stroke="#aaa89f" strokeWidth="2">
        <ellipse cx="1478.500" cy="1080" rx="93.500" ry="53.500" transform="rotate(24.300 1478.500 1080)" />
      </g>
    </g>

    {/* sketch crosses */}
    <g stroke="#a198a4" strokeWidth="1.500">
      <path d="M973 884h16M981 876v16" />
      <path d="M1220 727h16M1228 719v16" opacity="0.7" />
      <path d="M1719 1434h16M1727 1426v16" />
      <path d="M1967 1276h16M1975 1268v16" />
      <path d="M1470 1080h16M1478 1072v16" />
    </g>

    {/* WCS */}
    <g stroke="#2c18b8" strokeWidth="1.300" fill="none">
      <path d="M1441 1103L1491 1140L1530 1118L1551.500 1067L1499 1029L1462 1053Z" />
      <path d="M1478 1080L1520 983M1478 1080L1404 1128M1478 1080L1581 1155" />
    </g>
    <g fill="#2c18b8">
      <path d="M1520 981l1 13-6 9-3-8z" />
      <path d="M1406 1126l10-10 5 4-4 3z" />
      <path d="M1579 1154l-15-6-2-5 7 1z" />
    </g>
    <g fill="#2c18b8" fontSize="14">
      <text x="1518" y="981">Z</text>
      <text x="1396" y="1135">X</text>
      <text x="1581" y="1165">Y</text>
    </g>

    {/* corner triad */}
    <path d="M587 1619L612 1637L585 1669L563 1654L569 1633Z" fill="#cfd1d4" stroke="#b4b5b8" />
    <path d="M569 1633L579 1638L587 1619M579 1638L612 1637M579 1638L585 1669" fill="none" stroke="#bcbdc0" />
    <path d="M579 1638L563 1652" stroke="#d44" strokeWidth="1.500" opacity="0.5" />
    <path d="M579 1638L603 1660" stroke="#3a3" strokeWidth="1.500" opacity="0.5" />
    <path d="M579 1638L588 1615" stroke="#36c" strokeWidth="1.500" opacity="0.6" />
    <path d="M596 1603l-1 13-6 6-2-6z" fill="#0a33a8" />
    <path d="M550 1660l12-10 3 4-3 3z" fill="#d81a1a" />
    <path d="M618 1670l-17-13 3-3 5 3z" fill="#1a9c1a" />
    <text x="592" y="1602" fontSize="14" fill="#2a55c8">Z</text>
    <text x="543" y="1668" fontSize="14" fill="#d44">X</text>
    <text x="619" y="1680" fontSize="14" fill="#2a9c3a">Y</text>
  </svg>
);

const Speed = () => (
  <div className="absolute right-[10px] top-[125px] flex h-[74px] w-[147px] flex-col justify-center gap-[8px] rounded-[3px] bg-[#333535] pl-[15px] font-['Noto_Sans',sans-serif] text-[20px] leading-[26px]">
    <div className="flex items-center gap-[10px] text-[#f6a31f]">
      <svg width="14" height="16" viewBox="0 0 14 16">
        <path d="M7 15V2M1 8l6-6 6 6" fill="none" stroke="currentColor" strokeWidth="1.400" />
      </svg>
      0.0 KB/s
    </div>
    <div className="flex items-center gap-[10px] text-[#7ce52f]">
      <svg width="14" height="16" viewBox="0 0 14 16">
        <path d="M7 1v13M1 8l6 6 6-6" fill="none" stroke="currentColor" strokeWidth="1.400" />
      </svg>
      0.0 KB/s
    </div>
  </div>
);

const StatusBar = () => (
  <div className="flex h-[26px] shrink-0 items-center justify-between bg-[#d9d9d9] shadow-[inset_0_1px_0_#a9a9a9]">
    <span className={`${song} pl-[4px] text-[20px] leading-none tracking-[2.400px] text-[#111]`}>
      选择对象并使用 <span className="font-['Liberation_Sans',sans-serif] font-bold tracking-[3px]">MB3</span>，或者双击某一对象
    </span>
    <div className="flex h-full items-center">
      <span className="h-full w-px bg-[#f5f5f5]" />
      <span className="ml-[19px] h-full w-px bg-[#f5f5f5]" />
      <svg width="16" height="17" viewBox="0 0 16 17" className="ml-[3px]">
        <rect width="16" height="17" fill="#8098a8" />
        <path d="M3 3l11 1-1 8-10 1z" fill="#ccc" />
        <path d="M3 3h4v3H3zM7 6h4v3H7zM3 9h4v4H3zM11 3h3v3h-3z" fill="#666" />
      </svg>
      <svg width="15" height="16" viewBox="0 0 16 18" className="ml-[5px]">
        <path d="M1 5V1h4M11 1h4v4M15 13v4h-4M5 17H1v-4" fill="none" stroke="#fff" strokeWidth="1.500" />
        <rect x="4" y="5" width="8" height="8" fill="#3c78d2" stroke="#333" />
      </svg>
      <span className="ml-[37px] mr-[17px] h-full w-px bg-[#f5f5f5]" />
    </div>
  </div>
);

const TaskIcon = ({ children, underline = false, className = "" }: { children: React.ReactNode; underline?: boolean; className?: string }) => (
  <div className={`relative flex h-full items-center justify-center ${className}`}>
    {children}
    {underline && <span className="absolute bottom-0 left-[8px] right-[8px] h-[3px] bg-[#76b9ed]" />}
  </div>
);

const WeChat = ({ size = 28 }: { size?: number }) => (
  <svg width={size} height={size} viewBox="0 0 28 28" className="shrink-0">
    <ellipse cx="11" cy="11" rx="10.500" ry="9.500" fill="#2dc84d" />
    <path d="M5 18l-1 5 6-3z" fill="#2dc84d" />
    <ellipse cx="19.500" cy="18" rx="8" ry="7" fill="#eaeaea" stroke="#1c1c1c" />
    <circle cx="7.500" cy="8" r="1.400" fill="#1c5c2c" />
    <circle cx="14" cy="8" r="1.400" fill="#1c5c2c" />
    <circle cx="17" cy="17" r="1.100" fill="#888" />
    <circle cx="22" cy="17" r="1.100" fill="#888" />
  </svg>
);

const Taskbar = () => (
  <div className="relative flex h-[52px] shrink-0 items-center bg-[#1c1c1c]">
    <div className="flex h-full items-center">
      <TaskIcon className="w-[62px]">
        <svg width="24" height="25" viewBox="0 0 24 25">
          <path d="M0 4l11-2v10H0zM13 1.500L24 0v12H13zM0 13.500h11v10L0 21.500zM13 13.500h11V25l-11-1.500z" fill="#fff" />
        </svg>
      </TaskIcon>
      <TaskIcon className="w-[68px]">
        <svg width="30" height="30" viewBox="0 0 30 30">
          <circle cx="19" cy="11" r="10" fill="none" stroke="#fff" strokeWidth="1.500" />
          <path d="M12.500 18.500L1 29.500" stroke="#fff" strokeWidth="1.500" />
        </svg>
      </TaskIcon>
      <TaskIcon className="w-[65px]">
        <svg width="25" height="26" viewBox="0 0 26 34" preserveAspectRatio="none">
          <path d="M17 0l9 2-4 6h-7L9 14v8l3 4h4l1-7h-5l2-6h11l-2 14-6 7H7l-7-8V11z" fill="#d8261c" />
        </svg>
      </TaskIcon>
      <TaskIcon className="w-[65px]">
        <svg width="25" height="22" viewBox="0 0 26 28" preserveAspectRatio="none">
          <path d="M0 1h10l2 2h14v6H0z" fill="#d9a520" />
          <path d="M0 6h26v21H0z" fill="#f6cf59" />
          <path d="M8 19h10v8H8z" fill="#3a87d8" />
          <path d="M11 23h4v4h-4z" fill="#f6cf59" />
        </svg>
      </TaskIcon>
      <TaskIcon className="w-[65px]">
        <svg width="28" height="24" viewBox="0 0 30 32" preserveAspectRatio="none">
          <path d="M14 29H6l3-4C4 22 2 18 2 14 2 6 8 2 14 2s12 4 12 11" fill="none" stroke="#1e8ff0" strokeWidth="3.500" />
          <path d="M22 15l3 5-3 5-4-5z" fill="#2db84a" />
          <path d="M17 20h-5l5 5z" fill="#f2a51e" />
          <path d="M26 20h4l-4 5z" fill="#1e8ff0" />
          <circle cx="22" cy="27" r="2" fill="#e0401a" />
        </svg>
      </TaskIcon>
      <TaskIcon className="w-[65px]" underline>
        <svg width="28" height="28" viewBox="0 0 28 28">
          <path d="M14 14L1.900 7A14 14 0 0 1 26.100 7Z" fill="#db4437" />
          <path d="M14 14L26.100 7A14 14 0 0 1 14 28Z" fill="#f4c20d" />
          <path d="M14 14L14 28A14 14 0 0 1 1.900 7Z" fill="#1f9d55" />
          <circle cx="14" cy="14" r="6.500" fill="#fff" />
          <circle cx="14" cy="14" r="5" fill="#4285f4" />
        </svg>
      </TaskIcon>
      <TaskIcon className="w-[65px]" underline>
        <WeChat size={28} />
      </TaskIcon>
      <TaskIcon className="w-[65px]" underline>
        <svg width="25" height="24" viewBox="0 0 25 24">
          <rect x="1" y="1" width="23" height="22" fill="#2a1010" stroke="#e01a1a" strokeWidth="2" />
          <path d="M6 19c3-3 5-7 5-11 0-3 2-3 2 0 0 4 3 6 7 7-5-1-10 0-14 4z" fill="none" stroke="#ddd" strokeWidth="1.200" />
        </svg>
      </TaskIcon>
      <TaskIcon className="ml-px w-[63px] bg-[#4e4c4e] [&>span]:left-0 [&>span]:right-0" underline>
        <NxLogo size={30} />
      </TaskIcon>
    </div>
    <div className="ml-auto flex h-full items-center pr-[44px]">
      <svg width="16" height="33" viewBox="0 0 16 33" className="shrink-0">
        <path d="M2 0h3v8h6V0h3v8h2v10a8 8 0 0 1-6 7v8H6v-8a8 8 0 0 1-6-7V8h2z" fill="#fff" />
      </svg>
      <div className="ml-[4px] flex h-[33px] w-[62px] items-center rounded-[1px] border-[3px] border-white p-px">
        <div className="flex h-full w-[46px] items-center justify-center overflow-visible bg-[#1c8e43] font-['Open_Sans',sans-serif] text-[20px] leading-none text-[#f2f2f2]">
          <span className="whitespace-nowrap">86%</span>
        </div>
      </div>
      <span className="h-[16px] w-[5px] bg-white" />
      <svg width="19" height="11" viewBox="0 0 19 11" className="ml-[13px] shrink-0">
        <path d="M1 10l8.500-9L18 10" fill="none" stroke="#ddd" strokeWidth="1.400" />
      </svg>
      <span className="ml-[18px] flex"><WeChat size={28} /></span>
      <svg width="23" height="22" viewBox="0 0 24 22" className="ml-[15px] shrink-0">
        <path d="M1 7h3l6-6v20l-6-6H1z" fill="none" stroke="#ddd" strokeWidth="1.200" />
        <path d="M15 8l6 6M21 8l-6 6" stroke="#ddd" strokeWidth="1.400" />
      </svg>
      <svg width="22" height="24" viewBox="0 0 22 24" className="ml-[23px] shrink-0">
        <path d="M1 23C1 12 9 3 20 1M7 23c0-7 5-12 11-14M12 23c0-3 3-6 6-7" fill="none" stroke="#bbb" strokeWidth="1.400" />
        <circle cx="19" cy="21" r="2" fill="#fff" />
      </svg>
      <span className={`${cjk} ml-[13px] w-[24px] text-[24px] font-bold leading-none text-white`}>中</span>
      <span className="ml-[27px] flex h-[28px] w-[28px] items-center justify-center rounded-full bg-[#12b981] font-['Liberation_Sans',sans-serif] text-[24px] font-bold italic leading-none text-white">P</span>
      <span className="ml-[32px] -mt-[3px] w-[50px] font-['Open_Sans',sans-serif] text-[20px] leading-none text-white">10:25</span>
      <span className="-mt-[5px] ml-[33px] flex h-[23px] w-[28px] flex-col items-center justify-center gap-[3px] bg-white">
        <span className="h-px w-[16px] bg-black" />
        <span className="h-px w-[16px] bg-black" />
        <span className="h-px w-[10px] bg-black" />
      </span>
    </div>
    <span className={`${song} absolute right-[14px] top-[34px] text-[14px] leading-none tracking-[0.500px] text-[#b9b9b9]`}>UG爱好者论坛@哈哈哈</span>
    <span className="absolute bottom-0 right-[8px] top-0 w-px bg-[#666]" />
  </div>
);

export default function App() {
  return (
    <div className="flex h-[1800px] w-[2880px] flex-col overflow-hidden bg-[#1c1c1c] font-['Noto_Sans_CJK_SC',sans-serif]">
      <div className="flex h-[3px] shrink-0 bg-[#4a4a4e]">
        <span className="ml-[1228px] h-full w-[84px] bg-[#0a6cc4]" />
        <span className="h-full w-[400px] bg-[#e8e8e8]" />
      </div>
      <TitleBar />
      <TabBar />
      <Ribbon />
      <SelectBar />
      <div className="flex min-h-0 flex-1">
        <ResourceBar />
        <Navigator />
        <div className="flex min-w-0 flex-1 flex-col">
          <DocTab />
          <div className="relative min-h-0 flex-1 bg-[linear-gradient(180deg,#b4b4b4_0%,#c2c3c6_22%,#dbdce0_52%,#e3e4e7_75%,#e8e9eb_100%)]">
            <ModelView />
            <Speed />
          </div>
        </div>
      </div>
      <StatusBar />
      <Taskbar />
    </div>
  );
}
